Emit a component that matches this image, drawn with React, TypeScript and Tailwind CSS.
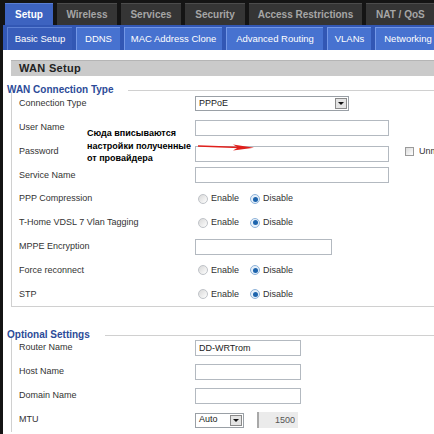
import type { ReactNode } from "react";

const Radio = ({ checked }: { checked?: boolean }) => (
  <span
    className={`inline-flex h-[10px] w-[10px] items-center justify-center rounded-full border ${
      checked ? "border-[#8fb3d9] bg-[#e6f0fa]" : "border-[#bfc3c8] bg-gradient-to-br from-[#d8d8d8] to-white"
    }`}
  >
    {checked && <span className="h-[5px] w-[5px] rounded-full bg-[#1d64ad]" />}
  </span>
);

const EnableDisable = () => (
  <div className="flex items-center pl-[3px] text-[9px] text-[#333]">
    <div className="flex w-[52px] items-center gap-[3px]">
      <Radio />
      <span>Enable</span>
    </div>
    <div className="flex items-center gap-[3px]">
      <Radio checked />
      <span>Disable</span>
    </div>
  </div>
);

const TextBox = ({ w, value = "" }: { w: string; value?: string }) => (
  <input
    readOnly
    value={value}
    className={`${w} h-[16px] border border-[#b3b9c0] bg-white px-[3px] text-[9px] text-[#222] outline-none`}
  />
);

const Select = ({ w, value }: { w: string; value: string }) => (
  <div className={`${w} flex h-[15px] items-center justify-between border border-[#9aa0a6] bg-white pl-[3px] pr-px text-[9px] text-[#222]`}>
    <span>{value}</span>
    <span className="flex h-[11px] w-[12px] items-center justify-center border border-[#8a8a8a] bg-[#e4e4e4]">
      <span className="h-0 w-0 border-x-[3px] border-t-[3px] border-x-transparent border-t-[#111]" />
    </span>
  </div>
);

const Row = ({ label, children, h = "h-[23.8px]" }: { label: string; children?: ReactNode; h?: string }) => (
  <div className={`flex ${h} items-center`}>
    <div className="w-[183px] shrink-0 pl-[7px] text-[9px] text-[#333]">{label}</div>
    <div className="flex items-center">{children}</div>
  </div>
);

const Legend = ({ title }: { title: string }) => (
  <div className="flex h-[10px] items-center">
    <span className="text-[10px] font-bold leading-[10px] text-[#2c4b98]">{title}</span>
    <div className="ml-[15px] h-px flex-1 bg-[#d0d0d0]" />
  </div>
);

const topTabs = [
  { name: "Wireless", w: "w-[60px] justify-center" },
  { name: "Services", w: "w-[60px] justify-center" },
  { name: "Security", w: "w-[60px] justify-center" },
  { name: "Access Restrictions", w: "w-[113px] justify-center" },
  { name: "NAT / QoS", w: "w-[80px] pl-[10px]" },
];

const subTabs = [
  { name: "DDNS", w: "w-[44px]" },
  { name: "MAC Address Clone", w: "w-[98px]" },
  { name: "Advanced Routing", w: "w-[97px]" },
  { name: "VLANs", w: "w-[44px]" },
  { name: "Networking", w: "w-[65px]" },
];

const App = () => {
  return (
    <div className="relative h-[434px] w-[434px] overflow-hidden bg-[#141414] font-['Liberation_Sans',Arial,sans-serif]">
      {/* main tabs */}
      <div className="flex h-[25px] items-end gap-[4px] pl-[5px]">
        <div className="flex h-[22px] w-[48px] shrink-0 items-center justify-center border-t border-[#5a7fd4] bg-[#3d63c0] text-[10px] font-bold text-white">
          Setup
        </div>
        {topTabs.map((t) => (
          <div
            key={t.name}
            className={`${t.w} flex h-[22px] shrink-0 items-center whitespace-nowrap border-t border-[#4c4c4c] bg-[#353535] text-[10px] font-bold text-[#a6a6a6]`}
          >
            {t.name}
          </div>
        ))}
      </div>

      <div className="ml-[3px] h-[409px] bg-white">
        {/* sub tabs */}
        <div className="flex h-[25px] items-end gap-[4px] bg-[#3257b4] pl-[4px]">
          <div className="flex h-[23px] w-[65px] shrink-0 items-center justify-center border-l border-t border-[#5c80d4] bg-[#385dba] text-[9.5px] text-white">
            Basic Setup
          </div>
          {subTabs.map((t) => (
            <div
              key={t.name}
              className={`${t.w} flex h-[23px] shrink-0 items-center justify-center border-l border-t border-[#7397e6] bg-[#4772d0] text-[9.5px] text-white`}
            >
              {t.name}
            </div>
          ))}
        </div>

        <div className="pl-[4px]">
          <div className="ml-[4px] mt-[10px] flex h-[16px] items-center border-t border-[#b5b5b5] bg-[#cacaca] pl-[8px] text-[11px] font-bold tracking-[0.3px] text-[#222]">
            WAN Setup
          </div>

          <div className="mt-[9px]">
            <Legend title="WAN Connection Type" />
            <div className="-mt-[3px] ml-[4px] border-b border-l border-[#d0d0d0]">
              <Row label="Connection Type">
                <Select w="w-[154px]" value="PPPoE" />
              </Row>
              <Row label="User Name">
                <TextBox w="w-[194px]" />
              </Row>
              <Row label="Password">
                <div className="relative">
                  <TextBox w="w-[194px]" />
                  <svg className="absolute left-[3px] top-[3px]" width="58" height="9" viewBox="0 0 58 9">
                    <line x1="0" y1="3" x2="42" y2="4.5" stroke="#e0201c" strokeWidth="1.5" />
                    <polygon points="35,1.6 56,4.8 35,7.6 40,4.6" fill="#e0201c" />
                  </svg>
                </div>
                <span className="ml-[16px] h-[9px] w-[9px] border border-[#9a9a9a] bg-gradient-to-br from-[#dcdcdc] to-white" />
                <span className="ml-[5px] whitespace-nowrap text-[9px] text-[#333]">Unmask</span>
              </Row>
              <Row label="Service Name">
                <TextBox w="w-[194px]" />
              </Row>
              <Row label="PPP Compression">
                <EnableDisable />
              </Row>
              <Row label="T-Home VDSL 7 Vlan Tagging">
                <EnableDisable />
              </Row>
              <Row label="MPPE Encryption">
                <TextBox w="w-[137px]" />
              </Row>
              <Row label="Force reconnect">
                <EnableDisable />
              </Row>
              <Row label="STP">
                <EnableDisable />
              </Row>
            </div>
          </div>

          <div className="mt-[23px]">
            <Legend title="Optional Settings" />
            <div className="-mt-[4px] ml-[4px] border-l border-[#d0d0d0]">
              <Row label="Router Name" h="h-[24px]">
                <TextBox w="w-[106px]" value="DD-WRTrom" />
              </Row>
              <Row label="Host Name" h="h-[24px]">
                <TextBox w="w-[106px]" />
              </Row>
              <Row label="Domain Name" h="h-[24px]">
                <TextBox w="w-[106px]" />
              </Row>
              <Row label="MTU" h="h-[24px]">
                <Select w="w-[49px]" value="Auto" />
                <input
                  readOnly
                  value="1500"
                  className="ml-[13px] h-[16px] w-[41px] border-l-2 border-[#a8a8a8] bg-[#ebebeb] pr-[3px] text-right text-[9px] text-[#555] outline-none"
                />
              </Row>
            </div>
          </div>
        </div>
      </div>

      {/* annotation over the form */}
      <div className="absolute left-[87px] top-[127px] text-[9px] font-bold leading-[12.5px] text-black">
        <div>Сюда вписываются</div>
        <div>настройки полученные</div>
        <div>от провайдера</div>
      </div>
    </div>
  );
};

export default App;
